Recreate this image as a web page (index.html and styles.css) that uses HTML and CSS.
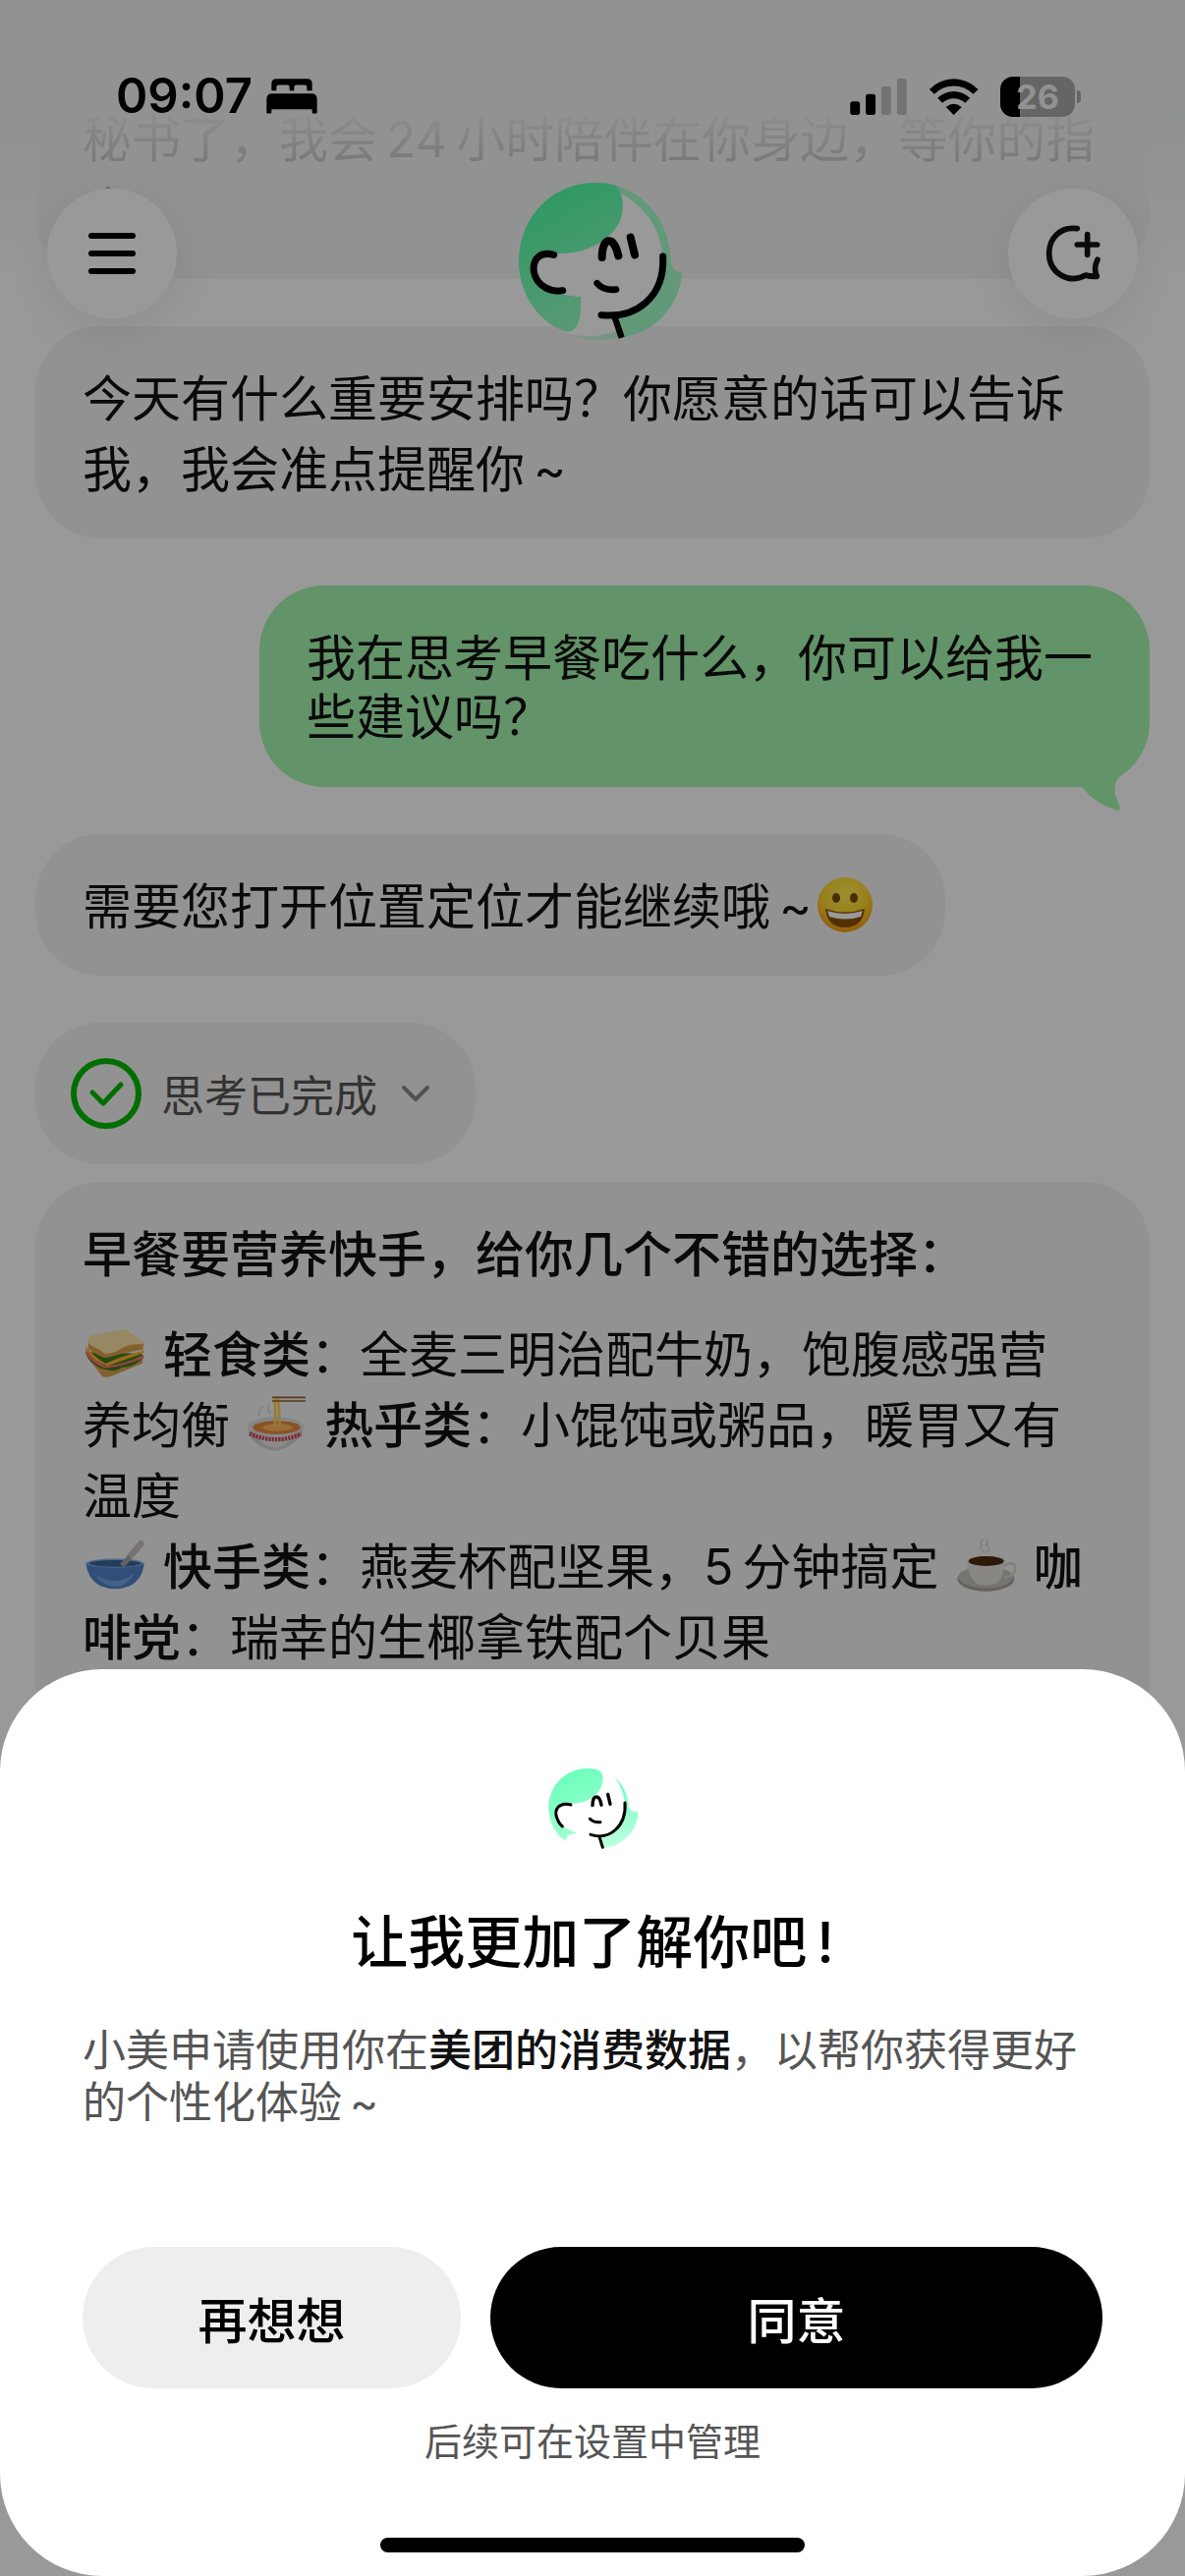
FILE: index.html
```html
<!DOCTYPE html>
<html lang="zh-CN">
<head>
    <meta charset="UTF-8">
    <meta name="viewport" content="width=device-width, initial-scale=1.0">
    <title>小美</title>
    <link rel="stylesheet" href="styles.css">
</head>
<body>
    <div class="app">
        <header class="topbar">
            <div class="status-bar">
                <div class="status-left">
                    <span class="clock">09:07</span>
                    <svg class="icon-bed" viewBox="482 62 156 107" aria-hidden="true">
                        <path d="M498 98V77Q498 62 513 62H607Q622 62 622 77V98H606V88Q606 81 599 81H574Q567 81 567 88V98H553V88Q553 81 546 81H520Q513 81 513 88V98Z"/>
                        <path d="M483 166V124Q483 107 500 107H620Q637 107 637 124V166Q637 168 633 168H625Q622 168 622 165V155H498V165Q498 168 495 168H486Q483 168 483 166Z"/>
                    </svg>
                </div>
                <div class="status-right">
                    <svg class="icon-signal" viewBox="75 56 174 112" aria-hidden="true">
                        <rect x="75" y="126" width="30" height="42" rx="8"/>
                        <rect x="123" y="104" width="30" height="64" rx="8"/>
                        <rect x="171" y="80" width="30" height="88" rx="8" fill="#c0c0c0"/>
                        <rect x="219" y="56" width="30" height="112" rx="8" fill="#c0c0c0"/>
                    </svg>
                    <svg class="icon-wifi" viewBox="315 56 153 112" aria-hidden="true">
                        <path d="M317 89Q350 57 392 57Q434 57 467 89L452 104Q426 79 392 79Q358 79 332 104Z"/>
                        <path d="M342 116Q364 95 392 95Q420 95 442 116L427 131Q412 117 392 117Q372 117 357 131Z"/>
                        <path d="M368 144Q392 124 416 144L392 168Z"/>
                    </svg>
                    <div class="battery"><span>26</span></div>
                </div>
            </div>
            <nav class="nav">
                <button class="round-btn" aria-label="菜单">
                    <svg width="48" height="42" viewBox="0 0 48 42" stroke="#000" stroke-width="6" stroke-linecap="round">
                        <path d="M3 3H45M3 21H45M3 39H45"/>
                    </svg>
                </button>
                <svg class="face" viewBox="84 48 501 480" role="img" aria-label="小美">
                    <defs>
                        <linearGradient id="hair" x1="0" y1="0" x2="0.4" y2="1">
                            <stop offset="0" stop-color="#43ff9f"/>
                            <stop offset="1" stop-color="#92ffc4"/>
                        </linearGradient>
                        <linearGradient id="pale" x1="0" y1="0" x2="1" y2="0">
                            <stop offset="0" stop-color="#e4f6ee"/>
                            <stop offset="1" stop-color="#bcf5d5"/>
                        </linearGradient>
                    </defs>
                    <path fill="#a4ffc8" d="M380 56C480 88 545 170 548 290Q553 322 583 322C575 420 505 505 400 521L370 455C450 455 522 390 522 270C518 190 470 120 390 80Z"/>
                    <path fill="#fff" d="M390 78C470 120 520 190 520 270C524 380 450 458 375 458L392 506C340 520 270 522 220 505L100 300L200 240Z"/>
                    <path fill="url(#pale)" d="M208 499C260 525 330 520 388 500L396 521C340 532 265 534 208 499Z"/>
                    <path fill="url(#hair)" d="M84 290C84 150 190 48 315 48C340 48 362 50 380 56C410 92 410 155 372 197C325 250 250 270 188 263C150 250 125 285 131 320C140 365 175 388 215 388Q240 395 274 396C274 450 272 503 230 503C150 480 84 390 84 290Z"/>
                    <g fill="none" stroke="#000" stroke-width="21" stroke-linecap="round">
                        <path d="M191 268C150 257 125 280 130 320C138 362 180 384 218 377"/>
                        <path stroke-width="24" d="M338 276C338 215 373 205 388 271"/>
                        <path stroke-width="24" d="M425 215L438 268"/>
                        <path stroke-width="20" d="M323 355Q343 378 381 374"/>
                        <path d="M524 273C530 400 440 463 336 452"/>
                        <path stroke-width="19" stroke-linecap="butt" d="M376 456L398 521"/>
                    </g>
                </svg>
                <button class="round-btn" aria-label="新对话">
                    <svg width="56" height="60" viewBox="669 504 168 180" fill="none" stroke="#111" stroke-width="17" stroke-linecap="round" stroke-linejoin="round">
                        <path d="M766 518C713 510 680 550 680 594C680 652 738 690 792 660Q802 664 826 664C817 645 819 630 828 613"/>
                        <path d="M797 536V598M766 567H827"/>
                    </svg>
                </button>
            </nav>
        </header>

        <main class="chat">
            <div class="bubble bubble-first">秘书了，我会&thinsp;24&thinsp;小时陪伴在你身边，等你的指令~</div>
            <div class="bubble">今天有什么重要安排吗？你愿意的话可以告诉我，我会准点提醒你&thinsp;~</div>
            <div class="bubble bubble-user">
                我在思考早餐吃什么，你可以给我一些建议吗？
                <svg class="tail" width="46" height="64" viewBox="0 0 46 64" aria-hidden="true">
                    <path d="M46 20C34 32 32 44 37 53Q42 64 38 64C22 60 8 50 0 38V20Z"/>
                </svg>
            </div>
            <div class="bubble">需要您打开位置定位才能继续哦&thinsp;~<svg class="emoji-face" viewBox="0 0 60 60" role="img" aria-label="笑脸">
                    <defs>
                        <radialGradient id="smile" cx="0.5" cy="0.3" r="0.7">
                            <stop offset="0" stop-color="#fff050"/>
                            <stop offset="0.6" stop-color="#ffd42e"/>
                            <stop offset="1" stop-color="#f59a10"/>
                        </radialGradient>
                    </defs>
                    <circle cx="30" cy="30" r="28" fill="url(#smile)"/>
                    <ellipse cx="21" cy="23" rx="4" ry="5" fill="#7a4a05"/>
                    <ellipse cx="39" cy="23" rx="4" ry="5" fill="#7a4a05"/>
                    <path d="M10 34Q30 41 50 34Q48 53 30 53Q12 53 10 34Z" fill="#8a5005"/>
                    <path d="M12 36Q30 42 48 36L46 42Q30 47 14 42Z" fill="#fff"/>
                </svg>
            </div>
            <button class="thinking">
                <svg width="72" height="72" viewBox="0 0 72 72" fill="none" stroke="#00b800" stroke-width="6">
                    <circle cx="36" cy="36" r="33"/>
                    <path d="M22 35L33 46L51 27" stroke-linecap="round" stroke-linejoin="round" stroke-width="5"/>
                </svg>
                <span>思考已完成</span>
                <svg width="30" height="18" viewBox="0 0 30 18" fill="none" stroke="#888" stroke-width="4" stroke-linecap="round" stroke-linejoin="round">
                    <path d="M3 3L15 15L27 3"/>
                </svg>
            </button>
            <div class="bubble bubble-answer">
                <h2>早餐要营养快手，给你几个不错的选择：</h2>
                <p>
                    <svg class="emoji" viewBox="36 36 192 168" role="img" aria-label="三明治">
                        <path fill="#d9a050" d="M42 130L90 192Q100 198 122 190L212 152L216 130Z"/>
                        <path fill="#3f7a1c" d="M39 118Q48 145 66 155Q85 170 108 172Q130 180 150 165Q190 165 217 133L210 122Z"/>
                        <path fill="#f0766a" d="M38 108Q60 140 98 158Q150 160 216 125L212 138Q160 160 100 167Q60 155 42 125Z"/>
                        <path fill="#ffb52e" d="M40 96Q60 130 100 153Q150 130 220 112L216 120Q150 145 105 160Q60 145 42 112Z"/>
                        <path fill="#dba14e" d="M48 78V108Q80 132 102 136Q150 120 214 110L217 90Z"/>
                        <path fill="#fbe3a6" d="M48 76Q50 68 62 66L154 49Q164 46 170 54L214 84Q222 92 212 94Q170 92 150 106Q120 125 98 122Q75 105 54 96Q46 90 48 76Z"/>
                    </svg>
                    <b>轻食类</b>：全麦三明治配牛奶，饱腹感强营养均衡
                    <svg class="emoji" viewBox="534 254 192 168" role="img" aria-label="热面">
                        <path fill="#d2d2d2" d="M541 345Q540 392 594 414Q622 428 652 414Q708 390 711 345Z"/>
                        <path fill="#e6e6e6" d="M560 350Q565 392 606 408Q625 414 642 408Q676 392 684 350Z"/>
                        <ellipse cx="626" cy="347" rx="85" ry="29" fill="#dedede"/>
                        <ellipse cx="628" cy="350" rx="73" ry="20" fill="#e88b3c"/>
                        <ellipse cx="632" cy="350" rx="46" ry="11" fill="#ffb55e"/>
                        <path d="M546 369Q625 403 704 370" fill="none" stroke="#d4455a" stroke-width="13" stroke-dasharray="7 3"/>
                        <path d="M624 262V346M634 262L638 346" stroke="#f8cf52" stroke-width="8"/>
                        <path d="M615 258H717M615 269H717" stroke="#956028" stroke-width="5"/>
                        <path d="M575 315Q572 294 588 284M610 310Q596 290 606 276" fill="none" stroke="#d8d8d8" stroke-width="5"/>
                    </svg>
                    <b>热乎类</b>：小馄饨或粥品，暖胃又有温度
                </p>
                <p>
                    <svg class="emoji" viewBox="36 690 192 168" role="img" aria-label="碗和勺">
                        <path fill="#4f83c8" d="M40 768Q45 815 84 838Q130 856 174 838Q215 815 218 768Z"/>
                        <path fill="#6fa3e2" d="M66 800Q130 845 190 798Q165 840 130 840Q92 840 66 800Z"/>
                        <ellipse cx="129" cy="768" rx="88" ry="14" fill="#8cb8ee"/>
                        <ellipse cx="129" cy="769" rx="80" ry="10" fill="#3c6499"/>
                        <path d="M150 776Q170 757 182 738" stroke="#a8a0a4" stroke-width="16" fill="none"/>
                        <path d="M180 742L208 709" stroke="#c9c0c4" stroke-width="20" stroke-linecap="round"/>
                    </svg>
                    <b>快手类</b>：燕麦杯配坚果，5&thinsp;分钟搞定
                    <svg class="emoji" viewBox="38 62 192 168" role="img" aria-label="咖啡">
                        <ellipse cx="132" cy="189" rx="87" ry="37" fill="#a7a39a"/>
                        <ellipse cx="132" cy="183" rx="84" ry="33" fill="#c4c1b8"/>
                        <path d="M188 150C206 132 223 142 222 158C220 174 205 182 188 184" fill="none" stroke="#d9d6ce" stroke-width="8"/>
                        <path fill="#e4e1da" d="M75 128Q75 180 102 202Q132 213 163 202Q191 180 190 128Z"/>
                        <ellipse cx="132" cy="128" rx="58" ry="18" fill="#f2f0ea"/>
                        <ellipse cx="133" cy="134" rx="54" ry="15" fill="#4a2a12"/>
                        <path d="M128 108Q108 92 120 84Q108 74 126 68M134 108Q150 96 132 84Q146 76 130 70" fill="none" stroke="#ccd4d4" stroke-width="4"/>
                    </svg>
                    <b>咖啡党</b>：瑞幸的生椰拿铁配个贝果
                </p>
            </div>
        </main>

        <div class="scrim"></div>

        <section class="sheet" role="dialog" aria-labelledby="sheet-title">
            <svg class="sheet-face" viewBox="116 90 276 249" aria-hidden="true">
                <defs>
                    <linearGradient id="hair-light" x1="0" y1="0" x2="0.3" y2="1">
                        <stop offset="0" stop-color="#62ffb8"/>
                        <stop offset="1" stop-color="#a0ffd2"/>
                    </linearGradient>
                    <linearGradient id="tail-light" x1="0" y1="0" x2="0" y2="1">
                        <stop offset="0" stop-color="#6effba"/>
                        <stop offset="1" stop-color="#beffe2"/>
                    </linearGradient>
                </defs>
                <path fill="url(#hair-light)" d="M120 210C120 140 175 90 240 90C272 90 286 98 286 122C284 165 245 197 190 197C150 190 138 215 143 235C148 255 162 272 205 286Q203 291 190 290Q175 290 172 312C140 290 120 255 120 210Z"/>
                <path fill="url(#tail-light)" d="M315 112C345 135 362 165 366 212Q375 225 394 222C390 280 350 325 288 333L278 300C330 295 354 250 353 195C345 155 335 130 315 112Z"/>
                <g fill="none" stroke="#000" stroke-width="9" stroke-linecap="round">
                    <path d="M188 201C150 191 138 217 144 237Q150 257 162 267"/>
                    <path stroke-width="10" d="M254 203C254 168 276 168 281 202"/>
                    <path stroke-width="10" d="M301 169L308 199"/>
                    <path d="M246 244Q257 256 278 254"/>
                    <path d="M353 195C358 262 310 312 248 292"/>
                    <path d="M276 302L285 331"/>
                </g>
            </svg>
            <h1 id="sheet-title">让我更加了解你吧&thinsp;!</h1>
            <p class="sheet-desc">小美申请使用你在<b>美团的消费数据</b>，以帮你获得更好的个性化体验&thinsp;~</p>
            <div class="actions">
                <button class="btn">再想想</button>
                <button class="btn btn-primary">同意</button>
            </div>
            <p class="hint">后续可在设置中管理</p>
            <div class="home-indicator"></div>
        </section>
    </div>
</body>
</html>
```

FILE: styles.css
```css
* {
    box-sizing: border-box;
}

body {
    margin: 0;
    font-family: Inter, "Noto Sans CJK SC", sans-serif;
    background: #fff;
    color: #111;
}

h1, h2, p {
    margin: 0;
}

button {
    border: none;
    padding: 0;
    font-family: inherit;
    color: inherit;
    cursor: pointer;
}

.app {
    position: relative;
    height: 100vh;
    overflow: hidden;
}

/* header floats over the scrolled chat */
.topbar {
    position: absolute;
    top: 0;
    left: 0;
    right: 0;
    z-index: 1;
    height: 352px;
    background: linear-gradient(#f2f3f3 0, #f2f3f3 108px, rgba(242, 243, 243, 0.8) 170px, rgba(242, 243, 243, 0.7) 200px, rgba(242, 243, 243, 0) 280px);
}

.status-bar {
    display: flex;
    justify-content: space-between;
    align-items: center;
    height: 120px;
    padding: 76px 112px 0 118px;
}

.status-left,
.status-right {
    display: flex;
    align-items: center;
}

.status-left {
    gap: 14px;
}

.status-right {
    gap: 22px;
}

.clock {
    font-size: 49px;
    font-weight: 600;
    line-height: 44px;
    color: #000;
}

.icon-bed {
    width: 52px;
    height: 36px;
}

.icon-signal {
    width: 58px;
    height: 37px;
}

.icon-wifi {
    width: 51px;
    height: 37px;
}

.battery {
    position: relative;
    width: 76px;
    height: 41px;
    border-radius: 13px;
    background: linear-gradient(90deg, #000 20px, #a9a9a9 20px);
    color: #f3f3f3;
    font-size: 34px;
    font-weight: 700;
    line-height: 41px;
    text-align: center;
}

.battery::after {
    content: "";
    position: absolute;
    left: 78px;
    top: 14px;
    width: 4px;
    height: 13px;
    border-radius: 0 4px 4px 0;
    background: #a9a9a9;
}

.nav {
    display: flex;
    justify-content: space-between;
    align-items: center;
    padding: 66px 48px 0;
}

.round-btn {
    display: flex;
    align-items: center;
    justify-content: center;
    width: 132px;
    height: 132px;
    margin-bottom: 16px;
    border-radius: 50%;
    background: #fff;
    box-shadow: 0 12px 48px rgba(0, 0, 0, 0.08);
}

.face {
    width: 167px;
    height: 160px;
    margin-left: 16px;
}

.chat {
    display: flex;
    flex-direction: column;
    align-items: flex-start;
    gap: 48px;
    padding: 0 36px;
}

.bubble {
    padding: 38px 48px 34px;
    border-radius: 66px;
    background: #f3f3f3;
    font-size: 50px;
    line-height: 72px;
}

.bubble-first {
    padding-top: 106px;
    border-radius: 0 0 66px 66px;
}

.bubble-user {
    position: relative;
    align-self: flex-end;
    max-width: 906px;
    padding: 44px 48px 41px;
    background: #a5f5ad;
    line-height: 60px;
}

.tail {
    position: absolute;
    right: 24px;
    bottom: -24px;
    fill: #a5f5ad;
}

.emoji-face {
    width: 60px;
    height: 60px;
    margin: 0 24px 0 4px;
    vertical-align: -10px;
}

.thinking {
    display: flex;
    align-items: center;
    height: 144px;
    padding: 0 46px 0 36px;
    border-radius: 66px;
    background: #f3f3f3;
    font-size: 44px;
    color: #555;
}

.thinking span {
    margin: 0 24px 0 20px;
}

.bubble-answer {
    height: 700px;
    margin-top: -30px;
    padding-right: 62px;
}

.bubble-answer h2 {
    margin-bottom: 30px;
    font-size: 50px;
    font-weight: 500;
}

b {
    font-weight: 500;
}

.emoji {
    width: 64px;
    height: 56px;
    margin: 0 2px;
    vertical-align: -8px;
}

.scrim {
    position: absolute;
    inset: 0;
    z-index: 2;
    background: rgba(0, 0, 0, 0.4);
}

.sheet {
    position: absolute;
    left: 0;
    right: 0;
    bottom: 0;
    z-index: 3;
    display: flex;
    flex-direction: column;
    align-items: center;
    padding: 101px 84px 24px;
    border-radius: 104px;
    background: #fff;
}

.sheet-face {
    width: 92px;
    height: 83px;
}

.sheet h1 {
    margin-top: 58px;
    font-size: 58px;
    font-weight: 500;
    line-height: 72px;
    color: #000;
}

.sheet-desc {
    align-self: stretch;
    margin-top: 48px;
    font-size: 44px;
    line-height: 53px;
    color: #555;
}

.sheet-desc b {
    color: #111;
}

.actions {
    display: flex;
    align-self: stretch;
    gap: 30px;
    margin-top: 120px;
}

.btn {
    flex: 385;
    height: 144px;
    border-radius: 72px;
    background: #eee;
    color: #000;
    font-size: 50px;
    font-weight: 500;
}

.btn-primary {
    flex: 623;
    background: #000;
    color: #fff;
}

.hint {
    margin-top: 27px;
    font-size: 38px;
    line-height: 54px;
    color: #555;
}

.home-indicator {
    width: 432px;
    height: 15px;
    margin-top: 71px;
    border-radius: 8px;
    background: #000;
}
```
